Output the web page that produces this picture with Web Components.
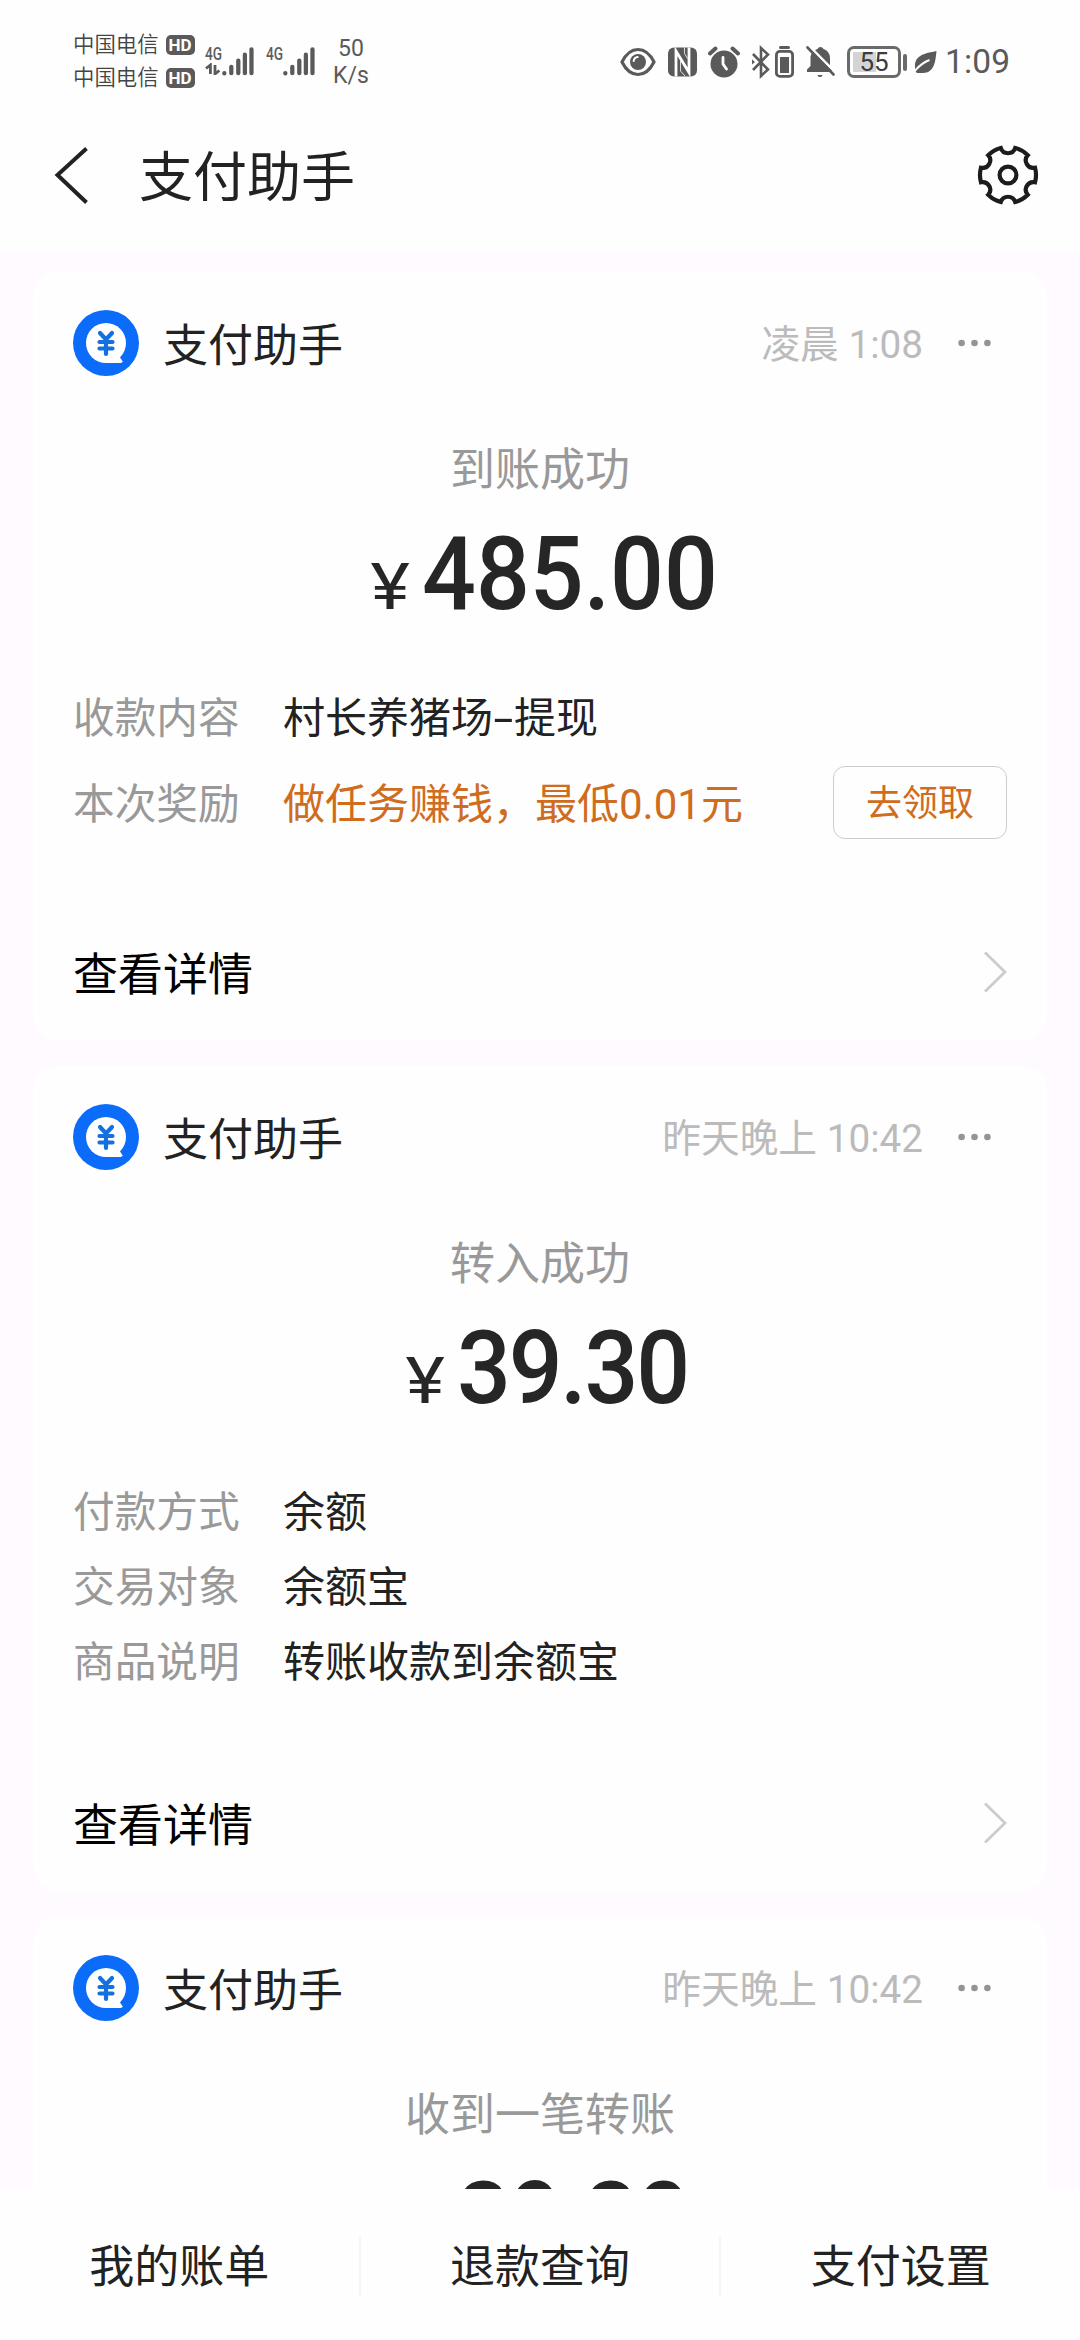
<!DOCTYPE html>
<html lang="zh-CN">
<head>
<meta charset="utf-8">
<title>支付助手</title>
<style>
html,body{margin:0;padding:0}
body{width:1080px;height:2340px;overflow:hidden;background:#fefaff;font-family:Roboto,"Noto Sans CJK SC",sans-serif;color:#222}
</style>
</head>
<body>
<pay-screen></pay-screen>
<script>
const define = (name, html) => customElements.define(name, class extends HTMLElement {
  constructor() {
    super();
    const t = document.createElement('template');
    t.innerHTML = html;
    this.attachShadow({mode: 'open'}).appendChild(t.content.cloneNode(true));
  }
});

define('sim-signal', `
<style>
:host{display:flex;width:49px;height:32px}
.g{width:17px;font:500 18px/18px Roboto,sans-serif;color:#5e5e5e}
.g span{display:block;transform:scaleX(.76);transform-origin:left;width:24px}
svg{display:block}
::slotted(svg){display:block}
</style>
<div class="g"><span>4G</span><slot></slot></div>
<svg width="33" height="32" viewBox="0 0 33 32" stroke="#5a5a5a" stroke-width="4.4" stroke-linecap="round"><path d="M2.4 28.4v.4M9.6 22v6.6M16.8 15.5v13.1M23.6 9.5v19.1M30.4 4v24.6"/></svg>`);

define('status-bar', `
<style>
:host{display:flex;height:118px;box-sizing:border-box;padding:28px 70px 0 73px;color:#5a5a5a;background:#fefefe}
.sims{display:flex;flex-direction:column;width:132px}
.sim{display:flex;align-items:center;height:33px;font:350 21.4px/35px Roboto,"Noto Sans CJK SC",sans-serif;color:#444}
.hd{margin-left:7px;width:29px;height:20px;border-radius:5px;background:#5a5a5a;color:#fff;font:700 17px/20px Roboto,sans-serif;text-align:center}
.sig{display:flex;gap:12px;padding-top:17px}
.sp{width:40px;margin-left:16px;text-align:center;font:400 23px/33px Roboto,sans-serif;padding-top:4px}
.sp div{height:27px;line-height:33px}
.r{display:flex;margin-left:auto;height:34px;margin-top:17px;align-items:center}
svg{display:block}
.bat{box-sizing:border-box;width:54px;height:32px;border:3px solid #6a6a6a;border-radius:7px;display:flex;padding:3px;background:linear-gradient(90deg,#d4d4d4 55%,transparent 55%) content-box;justify-content:center}
.bat span{font:400 26px/21px Roboto,sans-serif;color:#3c3c3c}
.nub{width:4px;height:17px;border-radius:2px;background:#6a6a6a;margin:0 8px 0 2px}
.t{font:400 33.5px/34px Roboto,sans-serif;margin-left:8px;width:65px;letter-spacing:.2px}
</style>
<div class="sims"><div class="sim">中国电信<div class="hd">HD</div></div><div class="sim">中国电信<div class="hd">HD</div></div></div>
<div class="sig">
<sim-signal><svg width="17" height="12" viewBox="0 0 17 12" fill="none" stroke="#5a5a5a" stroke-width="2.8"><path d="M5.4 11V2L1 5.5M10 2v9l4.4-3.5"/></svg></sim-signal>
<sim-signal></sim-signal>
</div>
<div class="sp"><div>50</div><div>K/s</div></div>
<div class="r">
<svg width="36" height="34" viewBox="0 0 36 34"><path d="M2 17C6 9 12 4.5 18 4.5S30 9 34 17C30 25 24 29.500 18 29.500S6 25 2 17Z" fill="none" stroke="#5a5a5a" stroke-width="3.2"/><circle cx="18" cy="17" r="8" fill="#5a5a5a"/><path d="M13.700 16a4.500 4.500 0 0 1 4-4" fill="none" stroke="#fff" stroke-width="2" stroke-linecap="round"/></svg>
<svg style="margin-left:12px" width="29" height="34" viewBox="0 0 29 34"><rect y="2.500" width="29" height="29" rx="6" fill="#5a5a5a"/><path d="M8 31.500V6L21 27.500V2.500" fill="none" stroke="#fff" stroke-width="2.800"/><path d="M12.500 16v10l4.500 5M16.500 2.500v6l3 5" fill="none" stroke="#fff" stroke-width="0.800"/></svg>
<svg style="margin-left:11px" width="32" height="34" viewBox="0 0 32 34"><circle cx="16" cy="19" r="13.500" fill="#5a5a5a"/><path d="M2 8.500 7.500 3.500M30 8.500 24.500 3.500" stroke="#5a5a5a" stroke-width="4" stroke-linecap="round"/><path d="M15 12.500V19l3.500 5" fill="none" stroke="#fff" stroke-width="2.800" stroke-linecap="round"/></svg>
<svg style="margin-left:12px" width="18" height="34" viewBox="0 0 18 34" fill="none" stroke="#5a5a5a" stroke-width="2.600"><path d="M1 9 16 24.500 9 31V3L16 9.500 1 25"/><path d="M0 14.500v5l3-2.500Z" fill="#5a5a5a" stroke="none"/></svg>
<svg style="margin-left:5px" width="19" height="34" viewBox="0 0 19 34"><rect x="1.400" y="6.400" width="16.200" height="25" rx="3.500" fill="none" stroke="#5a5a5a" stroke-width="2.800"/><rect x="5" y="12" width="9" height="16" fill="#5a5a5a"/><path d="M5.500 2.500h8" stroke="#5a5a5a" stroke-width="3" stroke-linecap="round"/></svg>
<svg style="margin-left:12px" width="29" height="34" viewBox="0 0 29 34"><path d="M1 27h25v-3l-2-3v-8c0-4.500-3-8-6.500-9a3.300 3.300 0 0 0-6 0C8 5 4.500 8.500 4.500 13v8L1 24.500ZM11.500 30h5a2.500 2 0 0 1-5 0Z" fill="#5a5a5a"/><path d="M3 1 31 29" stroke="#fff" stroke-width="2.600"/><path d="M1.500 2.500 27.500 29.500" stroke="#5a5a5a" stroke-width="2.600" stroke-linecap="round"/></svg>
<div class="bat" style="margin-left:12px"><span>55</span></div><div class="nub"></div>
<svg width="22" height="34" viewBox="0 0 22 34"><path d="M21.500 6C10 8.500 0 10 0 21v5l2 2h6C19 28 20.500 17 21.500 6Z" fill="#5a5a5a"/><path d="M-.500 26.500C4 20.500 8 17.500 14.500 15" fill="none" stroke="#fff" stroke-width="2"/></svg>
<div class="t">1:09</div>
</div>`);

define('nav-bar', `
<style>
:host{display:flex;align-items:center;height:115px;padding:0 40px 18px 54px;background:#fefefe}
h1{margin:6px auto 0 50px;font:400 54px/80px Roboto,"Noto Sans CJK SC",sans-serif;color:#222}
svg{display:block}
</style>
<svg width="35" height="60" viewBox="0 0 35 60"><path d="M32.500 2.500 3.500 29l29 27.500" fill="none" stroke="#222" stroke-width="4"/></svg>
<h1><slot></slot></h1>
<svg width="64" height="64" viewBox="0 1 64 64" fill="none" stroke="#1c1c1c" stroke-width="4.200"><path d="M59.050 24.750A28 28 0 0 1 59.050 39.250A7.600 7.600 0 0 0 51.800 51.800A28 28 0 0 1 39.250 59.050A7.600 7.600 0 0 0 24.750 59.050A28 28 0 0 1 12.200 51.800A7.600 7.600 0 0 0 4.950 39.250A28 28 0 0 1 4.950 24.750A7.600 7.600 0 0 0 12.200 12.200A28 28 0 0 1 24.750 4.950A7.600 7.600 0 0 0 39.250 4.950A28 28 0 0 1 51.800 12.200A7.600 7.600 0 0 0 59.050 24.750Z"/><circle cx="32" cy="32" r="8.400"/></svg>`);

define('info-row', `
<style>
:host{display:flex;align-items:center;height:75px;font:400 42px/75px Roboto,"Noto Sans CJK SC",sans-serif;color:#222}
.l{width:210px;color:#999;font-size:41.700px}
.v{flex:1;white-space:nowrap;display:flex;align-items:center}
::slotted(.dash){width:21px;text-align:center;transform:scaleX(1.700)}
:host(.reward){height:95px;color:#d06c1e}
:host(.reward) .l,:host(.reward) .v{padding-top:2px}
</style>
<div class="l"><slot name="label"></slot></div><div class="v"><slot></slot></div><slot name="action"></slot>`);

define('claim-button', `
<style>
:host{display:block;box-sizing:border-box;width:174px;height:73px;margin-top:-3px;border:1px solid #ccc;border-radius:12px;font:400 36px/75px Roboto,"Noto Sans CJK SC",sans-serif;text-align:center;color:#d06c1e}
</style><slot></slot>`);

define('message-card', `
<style>
:host{display:flex;flex-direction:column;box-sizing:border-box;height:825px;margin:0 33px;padding:38px 40px 0 40px;border-radius:24px;background:#fefefe}
:host(.short){height:768px}
:host(.partial){height:auto;flex:1;overflow:hidden;min-height:0;padding-bottom:0;border-radius:24px 24px 0 0}
:host(.partial) .foot{display:none}
.head{display:flex;align-items:center;height:66px;flex:none}
.name{margin:7px auto 0 24px;font:400 45px/66px Roboto,"Noto Sans CJK SC",sans-serif}
.time{font:400 38.700px/66px Roboto,"Noto Sans CJK SC",sans-serif;color:#bbb;margin:4px 35px 0 0}
.dots{margin-right:16px}
svg{display:block;flex:none}
.st{margin-top:61px;height:68px;flex:none;font:400 45px/68px Roboto,"Noto Sans CJK SC",sans-serif;color:#999;text-align:center}
.amt{display:flex;flex:none;justify-content:center;align-items:baseline;height:110px;margin:14px 0 52px 13px;color:#262626}
:host(.partial) .amt{margin-bottom:0}
.y{font:400 65px/110px Roboto,sans-serif;transform:scaleX(1.150);margin-right:15px}
.n{font:500 102px/110px Roboto,sans-serif;transform:scaleX(.930);transform-origin:left;margin-right:-20px}
::slotted(.tight){letter-spacing:-2.400px}
.foot{display:flex;align-items:center;justify-content:space-between;height:70px;margin:auto 0 31px;font:400 45px/70px Roboto,"Noto Sans CJK SC",sans-serif;color:#000}
.foot span{padding-top:3px}
.foot svg{margin-top:-4px}
</style>
<div class="head">
<svg width="66" height="66" viewBox="0 0 66 66"><circle cx="33" cy="33" r="33" fill="#0a6cf8"/><circle cx="33" cy="33" r="20" fill="#fff"/><path d="M33 53h14.500q3.500-.6 1.500-2.500l-2.500-4Z" fill="#fff"/><path d="M27 23l6 6.500 6-6.500M26.500 32h13M26.500 38.500h13M33 30v14" fill="none" stroke="#146fdf" stroke-width="4.200" stroke-linecap="round"/></svg>
<div class="name">支付助手</div><div class="time"><slot name="time"></slot></div>
<svg class="dots" width="33" height="10" viewBox="0 0 33 10" fill="#949494"><circle cx="3.600" cy="5" r="3.300"/><circle cx="16.500" cy="5" r="3.300"/><circle cx="29.400" cy="5" r="3.300"/></svg>
</div>
<div class="st"><slot name="status"></slot></div>
<div class="amt"><span class="y">¥</span><span class="n"><slot name="amount"></slot></span></div>
<slot></slot>
<div class="foot"><span>查看详情</span><svg width="24" height="42" viewBox="0 0 24 42"><path d="M2 1.500 22 21 2 40.500" fill="none" stroke="#ccc" stroke-width="2.800"/></svg></div>`);

define('bottom-tabs', `
<style>
:host{display:flex;align-items:center;height:151px;flex:none;background:#fefefe}
::slotted(*){flex:1;text-align:center;font:400 45px/61px Roboto,"Noto Sans CJK SC",sans-serif;box-sizing:border-box;height:60px;margin-bottom:-4px}
::slotted(:not(:last-child)){border-right:2px solid #f4f4f4}
</style><slot></slot>`);

define('pay-screen', `
<style>
:host{display:flex;flex-direction:column;width:1080px;height:2340px}
main{flex:1;min-height:0;overflow:hidden;display:flex;flex-direction:column;gap:26px;padding-top:21px}
message-card:not(.partial),status-bar,nav-bar{flex:none}
</style>
<status-bar></status-bar>
<nav-bar>支付助手</nav-bar>
<main>
<message-card class="short"><span slot="time">凌晨 1:08</span><span slot="status">到账成功</span><span slot="amount">485.00</span>
<info-row><span slot="label">收款内容</span><span>村长养猪场</span><span class="dash">-</span><span>提现</span></info-row>
<info-row class="reward"><span slot="label">本次奖励</span><span>做任务赚钱，最低0.01元</span><claim-button slot="action">去领取</claim-button></info-row>
</message-card>
<message-card><span slot="time">昨天晚上 10:42</span><span slot="status">转入成功</span><span slot="amount" class="tight">39.30</span>
<info-row><span slot="label">付款方式</span>余额</info-row>
<info-row><span slot="label">交易对象</span>余额宝</info-row>
<info-row><span slot="label">商品说明</span>转账收款到余额宝</info-row>
</message-card>
<message-card class="partial"><span slot="time">昨天晚上 10:42</span><span slot="status">收到一笔转账</span><span slot="amount" class="tight">39.30</span></message-card>
</main>
<bottom-tabs><span>我的账单</span><span>退款查询</span><span>支付设置</span></bottom-tabs>`);
</script>
</body>
</html>
